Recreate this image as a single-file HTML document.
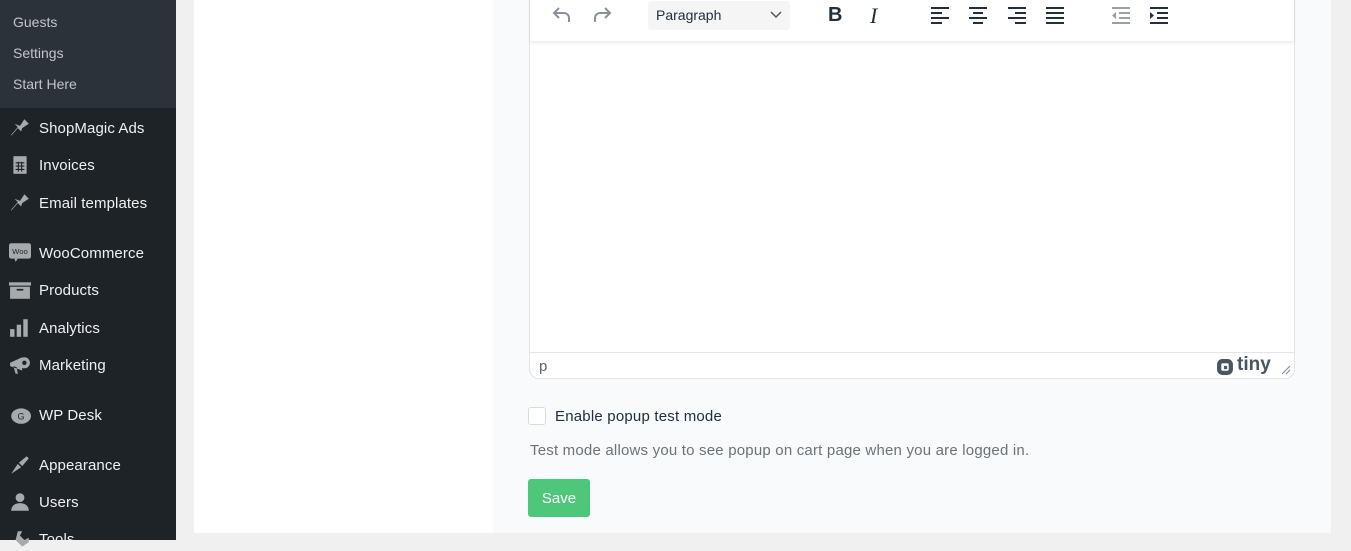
<!DOCTYPE html>
<html><head><meta charset="utf-8">
<style>
*{box-sizing:border-box;margin:0;padding:0}
body{width:1351px;height:540px;overflow:hidden;background:#f0f0f1;font-family:"Liberation Sans",sans-serif;position:relative}
#side{position:absolute;left:0;top:0;width:176px;height:540px;background:#1d2327}
#sub{position:absolute;left:0;top:0;width:176px;height:108px;background:#2c3338}
.s{position:absolute;left:13px;color:#c3c4c7;font-size:14px}
.m{position:absolute;left:39px;color:#f0f0f1;font-size:15px;letter-spacing:.1px}
.ic{position:absolute;left:9px;width:22px;height:22px}
#panel{position:absolute;left:194px;top:0;width:1137px;height:533px;background:#fff}
#right{position:absolute;left:493px;top:0;width:838px;height:533px;background:#f9fafb}
#ed{position:absolute;left:529px;top:-10px;width:766px;height:389px;background:#fff;border:1px solid #e3e5e8;border-radius:0 0 10px 10px}
#tb{position:absolute;left:0;top:0;width:764px;height:50px;background:#fff;box-shadow:0 2px 3px rgba(0,0,0,.08)}
#stat{position:absolute;left:0;top:361px;width:764px;border-top:1px solid #e3e5e8;height:27px}
.t{position:absolute;color:#222f3e}
</style></head><body>
<div id="side">
<div id="sub"></div>
<div class="s" style="top:14px">Guests</div>
<div class="s" style="top:45px">Settings</div>
<div class="s" style="top:76px">Start Here</div>

<svg class="ic" style="top:116px" viewBox="0 0 20 20"><path d="M10 9l4-6 4 4-6 4-1 3-3-3-6 7 0-1 6-7-3-3z" fill="#a7aaad"/></svg>
<div class="m" style="top:120px">ShopMagic Ads</div>
<svg class="ic" style="top:154px" viewBox="0 0 20 20"><rect x="4" y="2" width="12" height="16" fill="#a7aaad"/><path d="M6 8h8M6 11h8M6 14h8M8.5 7v9M11.5 7v9" stroke="#1d2327" stroke-width="1"/></svg>
<div class="m" style="top:157px">Invoices</div>
<svg class="ic" style="top:191px" viewBox="0 0 20 20"><path d="M10 9l4-6 4 4-6 4-1 3-3-3-6 7 0-1 6-7-3-3z" fill="#a7aaad"/></svg>
<div class="m" style="top:195px">Email templates</div>
<svg class="ic" style="top:241px" viewBox="0 0 20 20"><rect x="0" y="2" width="20" height="14" rx="2" fill="#a7aaad"/><path d="M5 16l1 3 2-3z" fill="#a7aaad"/><text x="10" y="12" font-size="7" text-anchor="middle" fill="#1d2327" font-family="Liberation Sans">Woo</text></svg>
<div class="m" style="top:245px">WooCommerce</div>
<svg class="ic" style="top:279px" viewBox="0 0 20 20"><rect x="0" y="3" width="20" height="3" fill="#a7aaad"/><rect x="1" y="7" width="18" height="11" fill="#a7aaad"/><rect x="7" y="9" width="6" height="1.5" fill="#1d2327"/></svg>
<div class="m" style="top:282px">Products</div>
<svg class="ic" style="top:317px" viewBox="0 0 20 20"><rect x="1" y="11" width="4" height="7" fill="#a7aaad"/><rect x="7" y="7" width="4" height="11" fill="#a7aaad"/><rect x="13" y="2" width="4" height="16" fill="#a7aaad"/></svg>
<div class="m" style="top:320px">Analytics</div>
<svg class="ic" style="top:354px" viewBox="0 0 20 20"><path d="M1 8l11-5v12L1 11zM4 11l2 7h2l-1-6z" fill="#a7aaad"/><circle cx="14" cy="8" r="5" fill="#a7aaad"/><circle cx="14" cy="8" r="2" fill="#1d2327"/></svg>
<div class="m" style="top:357px">Marketing</div>
<svg class="ic" style="top:404px" viewBox="0 0 20 20"><ellipse cx="11" cy="11" rx="9" ry="7" fill="#a7aaad"/><text x="11" y="14" font-size="8" text-anchor="middle" fill="#1d2327" font-family="Liberation Sans">G</text></svg>
<div class="m" style="top:407px">WP Desk</div>
<svg class="ic" style="top:454px" viewBox="0 0 20 20"><path d="M2 18l6-9 3 3zM9 8l7-6 2 2-6 7z" fill="#a7aaad"/></svg>
<div class="m" style="top:457px">Appearance</div>
<svg class="ic" style="top:491px" viewBox="0 0 20 20"><circle cx="10" cy="6" r="4" fill="#a7aaad"/><path d="M2 18c0-5 4-7 8-7s8 2 8 7z" fill="#a7aaad"/></svg>
<div class="m" style="top:494px">Users</div>
<svg class="ic" style="top:529px" viewBox="0 0 20 20"><path d="M8 2l4 0 -2 4 4 4 4-2v4l-6 4-6-6z" fill="#a7aaad"/></svg>
<div class="m" style="top:531px">Tools</div>
</div>

<div id="panel"></div>
<div id="right"></div>

<div id="ed">
<div id="tb">
<svg style="position:absolute;left:20px;top:12px" width="24" height="24" viewBox="0 0 24 24"><path d="M9 5L4 10l5 5M4 10h10a5 5 0 015 5v4" fill="none" stroke="#8a919b" stroke-width="2"/></svg>
<svg style="position:absolute;left:60px;top:12px" width="24" height="24" viewBox="0 0 24 24"><path d="M15 5l5 5-5 5M20 10H10a5 5 0 00-5 5v4" fill="none" stroke="#8a919b" stroke-width="2"/></svg>
<div style="position:absolute;left:118px;top:10px;width:142px;height:29px;background:#f5f5f5;border-radius:3px"></div>
<div class="t" style="left:126px;top:16px;font-size:14px">Paragraph</div>
<svg style="position:absolute;left:240px;top:19px" width="12" height="10" viewBox="0 0 12 10"><path d="M1 2l5 5 5-5" fill="none" stroke="#555" stroke-width="1.5"/></svg>
<div class="t" style="left:298px;top:13px;font-size:20px;font-weight:bold">B</div>
<div class="t" style="left:340px;top:12px;font-size:22px;font-style:italic;font-family:'Liberation Serif',serif">I</div>
<svg style="position:absolute;left:400px;top:15px" width="20" height="18" viewBox="0 0 20 18"><path d="M1 2h18M1 7h11M1 12h18M1 17h11" stroke="#222f3e" stroke-width="2"/></svg>
<svg style="position:absolute;left:438px;top:15px" width="20" height="18" viewBox="0 0 20 18"><path d="M1 2h18M5 7h10M1 12h18M5 17h10" stroke="#222f3e" stroke-width="2"/></svg>
<svg style="position:absolute;left:477px;top:15px" width="20" height="18" viewBox="0 0 20 18"><path d="M1 2h18M8 7h11M1 12h18M8 17h11" stroke="#222f3e" stroke-width="2"/></svg>
<svg style="position:absolute;left:515px;top:15px" width="20" height="18" viewBox="0 0 20 18"><path d="M1 2h18M1 7h18M1 12h18M1 17h18" stroke="#222f3e" stroke-width="2"/></svg>
<svg style="position:absolute;left:581px;top:15px" width="20" height="18" viewBox="0 0 20 18"><path d="M1 2h18M8 7h11M8 12h11M1 17h18" stroke="#9aa0a8" stroke-width="2"/><path d="M5 6L1 9.5 5 13z" fill="#9aa0a8"/></svg>
<svg style="position:absolute;left:619px;top:15px" width="20" height="18" viewBox="0 0 20 18"><path d="M1 2h18M8 7h11M8 12h11M1 17h18" stroke="#222f3e" stroke-width="2"/><path d="M1 6l4 3.5L1 13z" fill="#222f3e"/></svg>
</div>
<div id="stat">
<div style="position:absolute;left:9px;top:5px;font-size:15px;color:#666">p</div>
<svg style="position:absolute;left:686px;top:5px" width="18" height="18" viewBox="0 0 17 17"><rect x="1" y="1" width="15" height="15" rx="5" fill="#4a5563"/><rect x="5" y="5" width="7" height="7" rx="1" fill="#fff"/><rect x="7.5" y="7.5" width="3" height="3" fill="#4a5563"/></svg>
<div style="position:absolute;left:707px;top:1px;font-size:19px;font-weight:bold;color:#4a5563">tiny</div>
<svg style="position:absolute;left:751px;top:12px" width="10" height="10" viewBox="0 0 10 10"><path d="M9 1L1 9M9 5L5 9" stroke="#888" stroke-width="1"/></svg>
</div>
</div>

<div style="position:absolute;left:528px;top:407px;width:18px;height:18px;border:1px solid #d8dbe0;border-radius:3px;background:#fff"></div>
<div style="position:absolute;left:555px;top:408px;font-size:15px;color:#222f3e;letter-spacing:.2px">Enable popup test mode</div>
<div style="position:absolute;left:530px;top:442px;font-size:15px;color:#6b7280;letter-spacing:.2px">Test mode allows you to see popup on cart page when you are logged in.</div>
<div style="position:absolute;left:528px;top:479px;width:62px;height:38px;background:#4ec77b;border-radius:3px;color:#fff;font-size:15px;text-align:center;line-height:39px">Save</div>
</body></html>
